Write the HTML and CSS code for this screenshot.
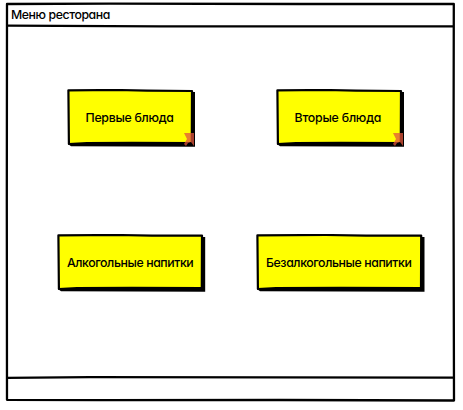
FILE: index.html
```
<!DOCTYPE html>
<html lang="ru">
<head>
<meta charset="utf-8">
<title>Меню ресторана</title>
<link rel="stylesheet" href="styles.css">
</head>
<body>
<main class="window">
  <svg class="outline" viewBox="0 0 463 410" aria-hidden="true">
    <path d="M7 4 L110 3.6 L300 4 L453.8 4 L453.5 180 L454 400.5 L280 400 L100 400.2 L7 399.8 L6.8 200 Z"/>
    <path d="M7 25.7 L160 26.4 L453 26.3 M7 377.8 L90 377.2 L453 377.6"/>
  </svg>
  <header class="title"><span class="label label-title">Меню ресторана</span></header>
  <section class="menu">
    <div class="row row-top">
      <button class="card card-small">
        <svg class="sketch" viewBox="0 0 128 58" aria-hidden="true"><path class="shadow" d="M3 3H128V57.7L4 57.3L1 55Z"/><path class="face" d="M1.4 1.3L50 1L80 1.7L125 2L124.8 54.2L65 53.8L20 54.2L1.9 55Z"/></svg>
        <span class="label label-first">Первые блюда</span>
        <svg class="link" viewBox="0 0 11 13" aria-hidden="true"><path d="M1 0H11V13L8 9L5 10L3 13L1 11L4 6Z"/></svg>
      </button>
      <button class="card card-small">
        <svg class="sketch" viewBox="0 0 128 58" aria-hidden="true"><path class="shadow" d="M3 3H128V57.7L4 57.3L1 55Z"/><path class="face" d="M1.4 1.3L50 1L80 1.7L125 2L124.8 54.2L65 53.8L20 54.2L1.9 55Z"/></svg>
        <span class="label label-second">Вторые блюда</span>
        <svg class="link" viewBox="0 0 11 13" aria-hidden="true"><path d="M1 0H11V13L8 9L5 10L3 13L1 11L4 6Z"/></svg>
      </button>
    </div>
    <div class="row row-bottom">
      <button class="card card-medium">
        <svg class="sketch" viewBox="0 0 149 58" aria-hidden="true"><path class="shadow" d="M3 3H148.2V57.7L4 57.3L1 55Z"/><path class="face" d="M1.4 1.3L60 1L95 1.7L145 1.6L144.8 54.2L75 53.8L20 54.2L1.9 55Z"/></svg>
        <span class="label label-alcohol">Алкогольные напитки</span>
      </button>
      <button class="card card-large">
        <svg class="sketch" viewBox="0 0 169 58" aria-hidden="true"><path class="shadow" d="M3 3H168.5V57.7L4 57.3L1 55Z"/><path class="face" d="M1.4 1.3L70 1L110 1.7L165.2 1.6L165 54.2L85 53.8L20 54.2L1.9 55Z"/></svg>
        <span class="label label-soft">Безалкогольные напитки</span>
      </button>
    </div>
  </section>
  <footer class="status"></footer>
</main>
</body>
</html>
```
FILE: styles.css
```
* { box-sizing: border-box; }
body { margin: 0; background: #fff; }
.window {
  position: relative;
  display: flex;
  flex-direction: column;
  width: 463px;
  height: 410px;
  overflow: hidden;
  color: #000;
  font: 500 12.3px/18px Inter, "Open Sans", sans-serif;
  font-feature-settings: "cv11";
}
.outline { position: absolute; inset: 0; width: 463px; height: 410px; }
.outline path { fill: none; stroke: #000; stroke-width: 2.3; stroke-linejoin: round; }
.title { height: 27px; padding: 6px 0 0 11px; }
.menu { flex: 1; padding-top: 62px; }
.row { display: flex; height: 58px; }
.row-top { padding-left: 67px; gap: 81px; margin-bottom: 87px; }
.row-bottom { padding-left: 57px; gap: 50px; }
.card {
  position: relative;
  display: flex;
  align-items: center;
  height: 58px;
  padding: 0 0 1px;
  border: 0;
  background: none;
  color: inherit;
  font: inherit;
  font-feature-settings: inherit;
}
.card-small { width: 128px; padding-left: 18.5px; }
.card-medium { width: 149px; padding-left: 10px; }
.card-large { width: 169px; padding-left: 10px; }
.sketch { position: absolute; inset: 0; width: 100%; height: 100%; }
.shadow { fill: #000; }
.face { fill: #ff0; stroke: #000; stroke-width: 2.2; stroke-linejoin: round; }
.label { position: relative; white-space: nowrap; }
.label-title { letter-spacing: -0.42px; }
.label-first { letter-spacing: -0.26px; }
.label-second { letter-spacing: -0.2px; }
.label-alcohol, .label-soft { letter-spacing: -0.4px; }
.link { position: absolute; left: 116px; top: 44px; width: 11px; height: 13px; }
.link path { fill: #e0553c; fill-opacity: .75; }
.status { height: 32px; }
```
